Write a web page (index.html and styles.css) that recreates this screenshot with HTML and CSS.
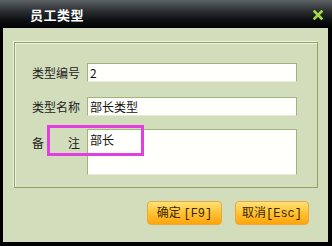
FILE: index.html
```html
<!DOCTYPE html>
<html lang="zh-CN">
<head>
    <meta charset="UTF-8">
    <title>员工类型</title>
    <link rel="stylesheet" href="styles.css">
</head>
<body>
    <div class="window">
        <div class="titlebar">
            <span class="title">员工类型</span>
            <svg class="close" width="10" height="10" viewBox="0 0 10 10">
                <path d="M1.5 1.5 L8.5 8.5 M8.5 1.5 L1.5 8.5" stroke="#a6d84a" stroke-width="2.6" stroke-linecap="square"/>
            </svg>
        </div>
        <div class="content">
            <div class="group">
                <div class="form-row">
                    <label class="label">类型编号</label>
                    <div class="field">2</div>
                </div>
                <div class="form-row">
                    <label class="label">类型名称</label>
                    <div class="field">部长类型</div>
                </div>
                <div class="form-row memo-row">
                    <label class="label memo-label"><span>备</span><span>注</span></label>
                    <div class="field memo">部长</div>
                </div>
            </div>
            <div class="buttons">
                <button class="btn">确定 <span class="key">[F9]</span></button>
                <button class="btn">取消<span class="key">[Esc]</span></button>
            </div>
        </div>
        <div class="highlight"></div>
    </div>
</body>
</html>
```

FILE: styles.css
```css
body {
    margin: 0;
    background: #000;
    font-family: "Noto Sans CJK SC", "DejaVu Sans", sans-serif;
}
.window {
    position: relative;
    width: 332px;
    height: 246px;
    background: #000;
    display: flex;
    flex-direction: column;
}
.titlebar {
    height: 28px;
    display: flex;
    align-items: center;
    justify-content: space-between;
    padding: 0 9px 0 30px;
    box-sizing: border-box;
    background: linear-gradient(#5d6265, #2a2e31 40%, #0b0e10 75%, #000);
}
.title {
    color: #fff;
    font-size: 13px;
    font-weight: bold;
    letter-spacing: 0.5px;
    line-height: 1;
    margin-top: 1px;
}
.close {
    margin-top: 1px;
}
.content {
    flex: 1;
    margin: 0 4px 4px 3px;
    background: #d2ddbc;
    padding: 14px 10px 0 11px;
    display: flex;
    flex-direction: column;
}
.group {
    height: 146px;
    box-sizing: border-box;
    border: 1px solid #8ea262;
    box-shadow: -1px -1px 0 #eef3e2, inset 1px 1px 0 #eef3e2;
    padding: 20px 0 0 17px;
    display: flex;
    flex-direction: column;
    gap: 15px;
}
.form-row {
    display: flex;
    align-items: center;
}
.memo-row {
    align-items: flex-start;
    margin-top: -2px;
}
.label {
    width: 55px;
    font-size: 12px;
    color: #222;
    line-height: 19px;
}
.memo-label {
    width: 48px;
    margin-right: 7px;
    display: flex;
    justify-content: space-between;
    margin-top: 4px;
}
.field {
    width: 210px;
    height: 19px;
    box-sizing: border-box;
    border: 1px solid #a2b37c;
    border-bottom-color: #e4ead6;
    background: #fffffb;
    font-size: 12px;
    line-height: 17px;
    padding-left: 2px;
    color: #111;
}
.memo {
    height: 46px;
    line-height: 20px;
}
.buttons {
    display: flex;
    justify-content: flex-end;
    gap: 13px;
    margin-top: 13px;
    padding-right: 9px;
}
.btn {
    width: 75px;
    height: 24px;
    padding: 0;
    border: 1px solid #e9a83c;
    border-radius: 4px;
    background: linear-gradient(#ffe27a, #ffc53a 45%, #ffa408);
    color: #3b2800;
    font-family: "Noto Sans CJK SC", sans-serif;
    font-size: 12px;
    line-height: 1;
}
.btn + .btn {
    width: 74px;
}
.key {
    font-family: "Liberation Mono", monospace;
    font-size: 12px;
}
.highlight {
    position: absolute;
    left: 47px;
    top: 125px;
    width: 97px;
    height: 31px;
    box-sizing: border-box;
    border: 3px solid #e23ee4;
}
```
